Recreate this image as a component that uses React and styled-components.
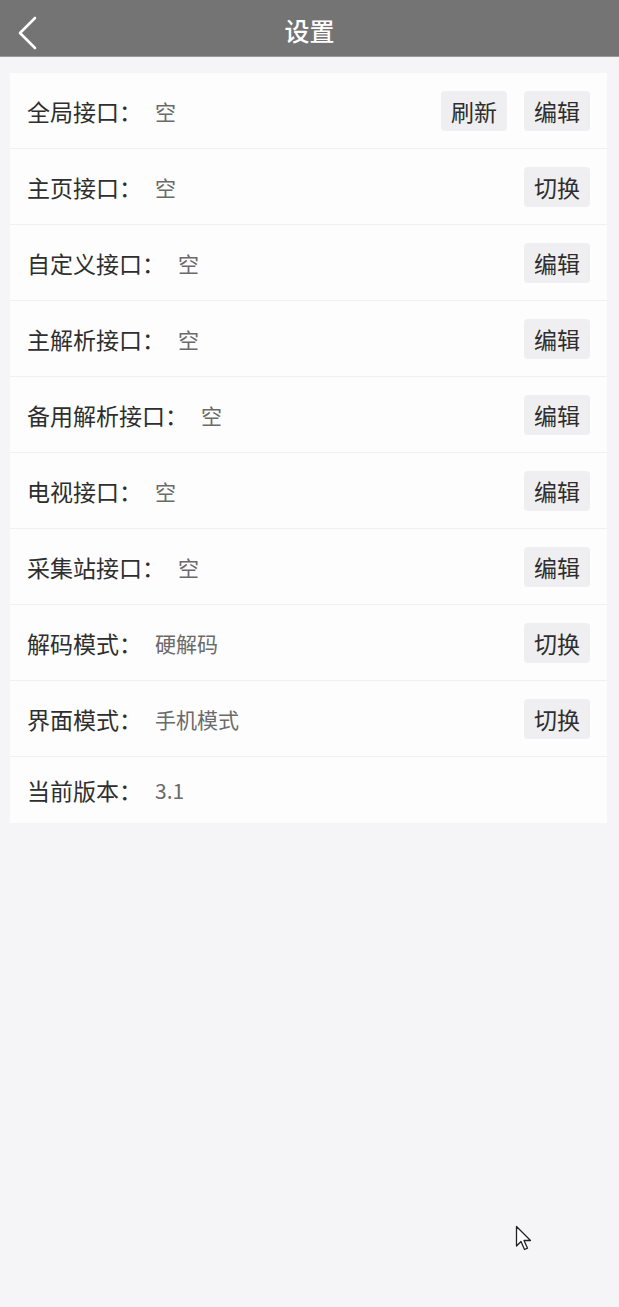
import React from 'react'
import styled, { createGlobalStyle } from 'styled-components'

const GlobalStyle = createGlobalStyle`
    html, body {
        margin: 0;
        padding: 0;
        background: #f5f4f7;
        font-family: "Noto Sans CJK SC", "Noto Sans", sans-serif;
    }
`

const rows = [
    { label: '全局接口：', value: '空', actions: ['刷新', '编辑'] },
    { label: '主页接口：', value: '空', actions: ['切换'] },
    { label: '自定义接口：', value: '空', actions: ['编辑'] },
    { label: '主解析接口：', value: '空', actions: ['编辑'] },
    { label: '备用解析接口：', value: '空', actions: ['编辑'] },
    { label: '电视接口：', value: '空', actions: ['编辑'] },
    { label: '采集站接口：', value: '空', actions: ['编辑'] },
    { label: '解码模式：', value: '硬解码', actions: ['切换'] },
    { label: '界面模式：', value: '手机模式', actions: ['切换'] },
    { label: '当前版本：', value: '3.1', actions: [] },
]

const App = () => {
  return (
    <Page>
        <GlobalStyle />
        <Header>
            <Back aria-label="返回">
                <svg width="22" height="34" viewBox="0 0 22 34" fill="none">
                    <path d="M19 2 L4 17 L19 32" stroke="#fff" strokeWidth="2.6" strokeLinecap="round" strokeLinejoin="round" />
                </svg>
            </Back>
            <Title>设置</Title>
        </Header>
        <Card>
            {rows.map(row => (
                <Row key={row.label} compact={row.actions.length === 0}>
                    <Label>{row.label}</Label>
                    <Value>{row.value}</Value>
                    <Actions>
                        {row.actions.map(a => (
                            <Button key={a}>{a}</Button>
                        ))}
                    </Actions>
                </Row>
            ))}
        </Card>
        <Cursor width="20" height="28" viewBox="0 0 20 28">
            <path d="M1.5 1.5 L1.5 21 L6 16.5 L9.5 24.5 L12.5 23.2 L9 15.5 L15.5 15.5 Z" fill="#fff" stroke="#222" strokeWidth="1.3" strokeLinejoin="round" />
        </Cursor>
    </Page>
  )
}

export default App;

const Page = styled.div`
    position: relative;
    min-height: 1307px;
    background: #f5f4f7;
`

const Header = styled.div`
    height: 56px;
    background: #747474;
    border-bottom: 1px solid #9a9a9a;
    display: flex;
    align-items: center;
    justify-content: center;
    position: relative;
`

const Back = styled.div`
    position: absolute;
    left: 16px;
    top: 16px;
    width: 22px;
    height: 34px;
`

const Title = styled.h1`
    margin: 4px 0 0;
    color: #fff;
    font-size: 25px;
    font-weight: 500;
`

const Card = styled.div`
    margin: 16px 12px 0 10px;
    background: #fdfdfd;
`

const Row = styled.div`
    display: flex;
    align-items: center;
    height: ${p => p.compact ? '66px' : '75px'};
    padding: 0 17px 0 17px;
    border-bottom: 1px solid #f0eff2;
    &:last-child {
        border-bottom: none;
    }
`

const Label = styled.span`
    font-size: 23px;
    color: #2e2e2e;
    white-space: nowrap;
`

const Value = styled.span`
    margin-left: 13px;
    font-size: 21px;
    color: #6a6a6a;
`

const Actions = styled.div`
    margin-left: auto;
    display: flex;
    gap: 17px;
`

const Button = styled.div`
    height: 40px;
    padding: 0 10px;
    display: flex;
    align-items: center;
    background: #efeef1;
    border-radius: 4px;
    font-size: 23px;
    color: #2e2e2e;
`

const Cursor = styled.svg`
    position: absolute;
    left: 515px;
    top: 1225px;
`
